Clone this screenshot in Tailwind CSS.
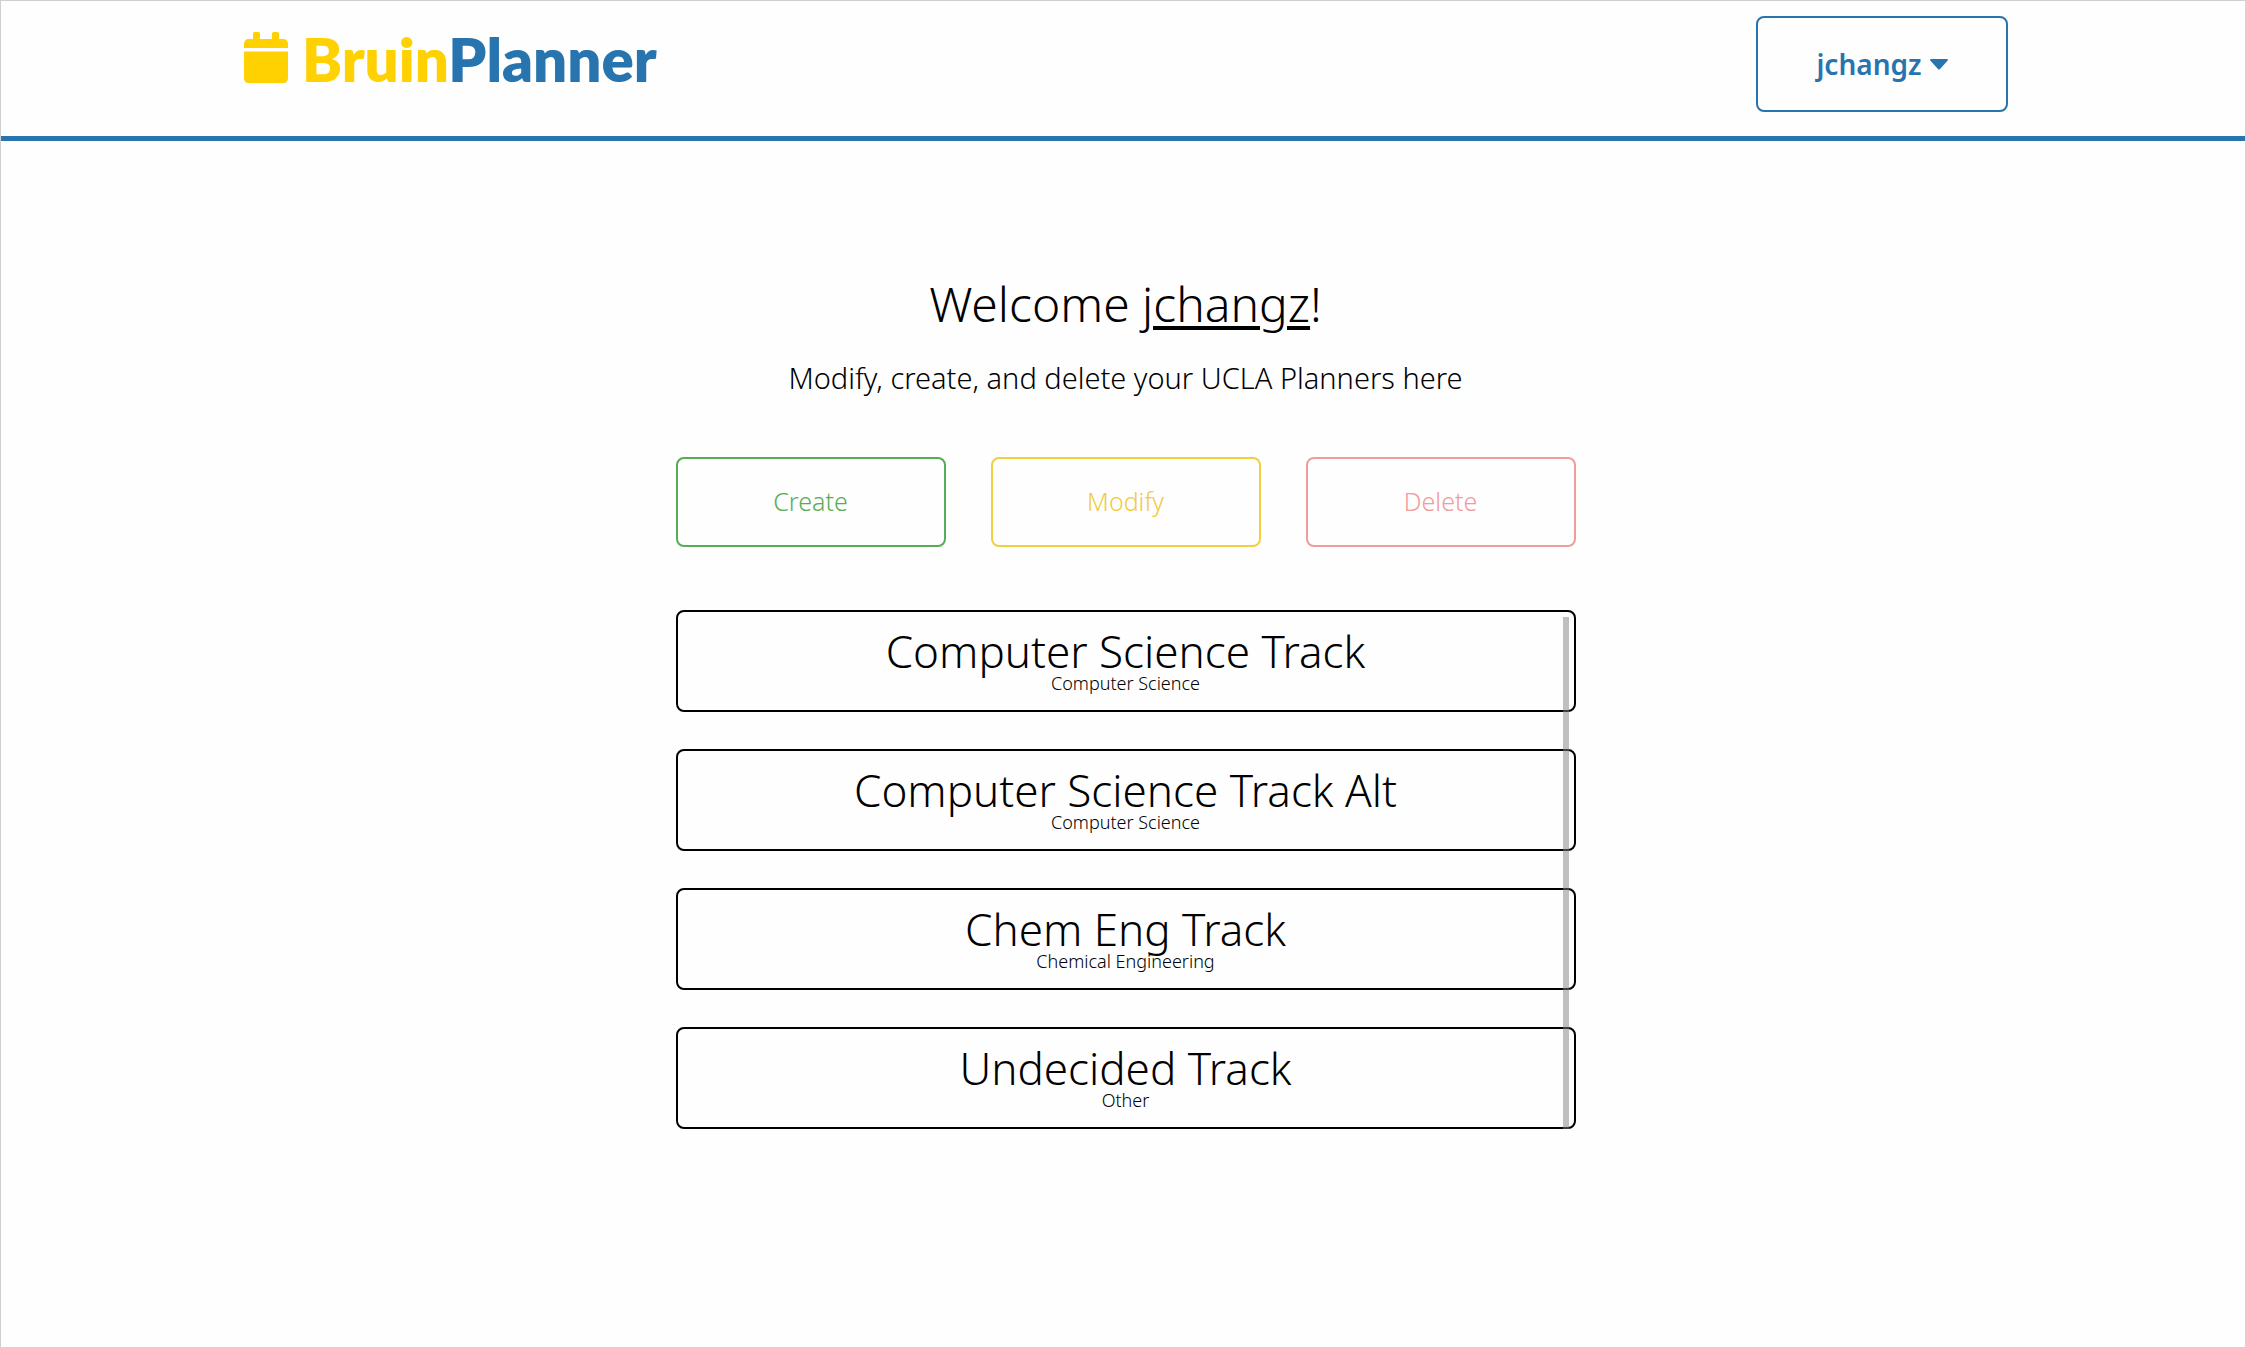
<!DOCTYPE html>
<html lang="en">
<head>
<meta charset="utf-8">
<title>BruinPlanner</title>
<script src="https://cdn.jsdelivr.net/npm/@tailwindcss/browser@4"></script>
</head>
<body class="min-h-screen border-t border-l border-[#d0d0d0] bg-[#fefefe] font-['Noto_Sans',sans-serif] font-light text-black">
  <header class="border-b-5 border-[#2774ae] pl-1">
    <div class="mx-auto flex h-[135px] w-[79%] max-w-[1766px] items-start justify-between pt-[15px]">
      <a href="#" class="flex items-start gap-[14px] pt-2 pl-0.5 font-['Lato',sans-serif] text-[60px] leading-[70px] font-extrabold">
        <svg class="mt-2 h-[51px] w-[44px]" viewBox="0 0 44 51" fill="#ffd100" aria-hidden="true">
          <path d="M0 16V12Q0 7 5 7H9V1.500Q9 0 10.500 0H14.500Q16 0 16 1.500V7H28V1.500Q28 0 29.500 0H33.500Q35 0 35 1.500V7H39Q44 7 44 12V16Z"/>
          <path d="M0 19.500H44V46Q44 51 39 51H5Q0 51 0 46Z"/>
        </svg>
        <span><span class="text-[#ffd100]">Bruin</span><span class="text-[#2774ae]">Planner</span></span>
      </a>
      <button type="button" class="flex h-24 w-[252px] items-center justify-center gap-2 rounded-lg border-2 border-[#2774ae] text-[28px] leading-10 font-semibold text-[#2774ae]">
        jchangz
        <svg class="h-[11px] w-[18px]" viewBox="0 0 18 11" fill="currentColor" aria-hidden="true"><path d="M1 0H17Q18.500 .4 17.500 1.800L10 10Q9 11 8 10L.5 1.800Q-.5 .4 1 0Z"/></svg>
      </button>
    </div>
  </header>

  <div class="pl-[5px]">
    <main class="mx-auto max-w-[900px] pt-[131px] pb-12 text-center">
      <h1 class="text-5xl leading-[64px]">Welcome <span class="underline decoration-4 underline-offset-4">jchangz</span>!</h1>
      <p class="mt-[22px] text-[29px] leading-10">Modify, create, and delete your UCLA Planners here</p>

      <div class="mt-[59px] grid grid-cols-3 gap-[45px] text-[25px] leading-8">
        <button type="button" class="h-[90px] rounded-lg border-2 border-[#57ad57] pb-0.5 text-[#57ad57]">Create</button>
        <button type="button" class="h-[90px] rounded-lg border-2 border-[#f0d040] pb-0.5 text-[#f2cb3c]">Modify</button>
        <button type="button" class="h-[90px] rounded-lg border-2 border-[#f09c9c] pb-0.5 text-[#f09c9c]">Delete</button>
      </div>

      <div class="relative mt-[63px]">
        <ul class="flex flex-col gap-[37px]">
          <li><button type="button" class="block h-[102px] w-full rounded-lg border-2 border-black">
            <span class="block text-[44px] leading-11">Computer Science Track</span>
            <span class="block text-lg leading-5">Computer Science</span>
          </button></li>
          <li><button type="button" class="block h-[102px] w-full rounded-lg border-2 border-black">
            <span class="block text-[44px] leading-11">Computer Science Track Alt</span>
            <span class="block text-lg leading-5">Computer Science</span>
          </button></li>
          <li><button type="button" class="block h-[102px] w-full rounded-lg border-2 border-black">
            <span class="block text-[44px] leading-11">Chem Eng Track</span>
            <span class="block text-lg leading-5">Chemical Engineering</span>
          </button></li>
          <li><button type="button" class="block h-[102px] w-full rounded-lg border-2 border-black">
            <span class="block text-[44px] leading-11">Undecided Track</span>
            <span class="block text-lg leading-5">Other</span>
          </button></li>
        </ul>
        <!-- overlay scroll bar -->
        <div class="absolute top-[7px] right-[7px] bottom-0 w-1.5 bg-[#808080]/50"></div>
      </div>
    </main>
  </div>
</body>
</html>
